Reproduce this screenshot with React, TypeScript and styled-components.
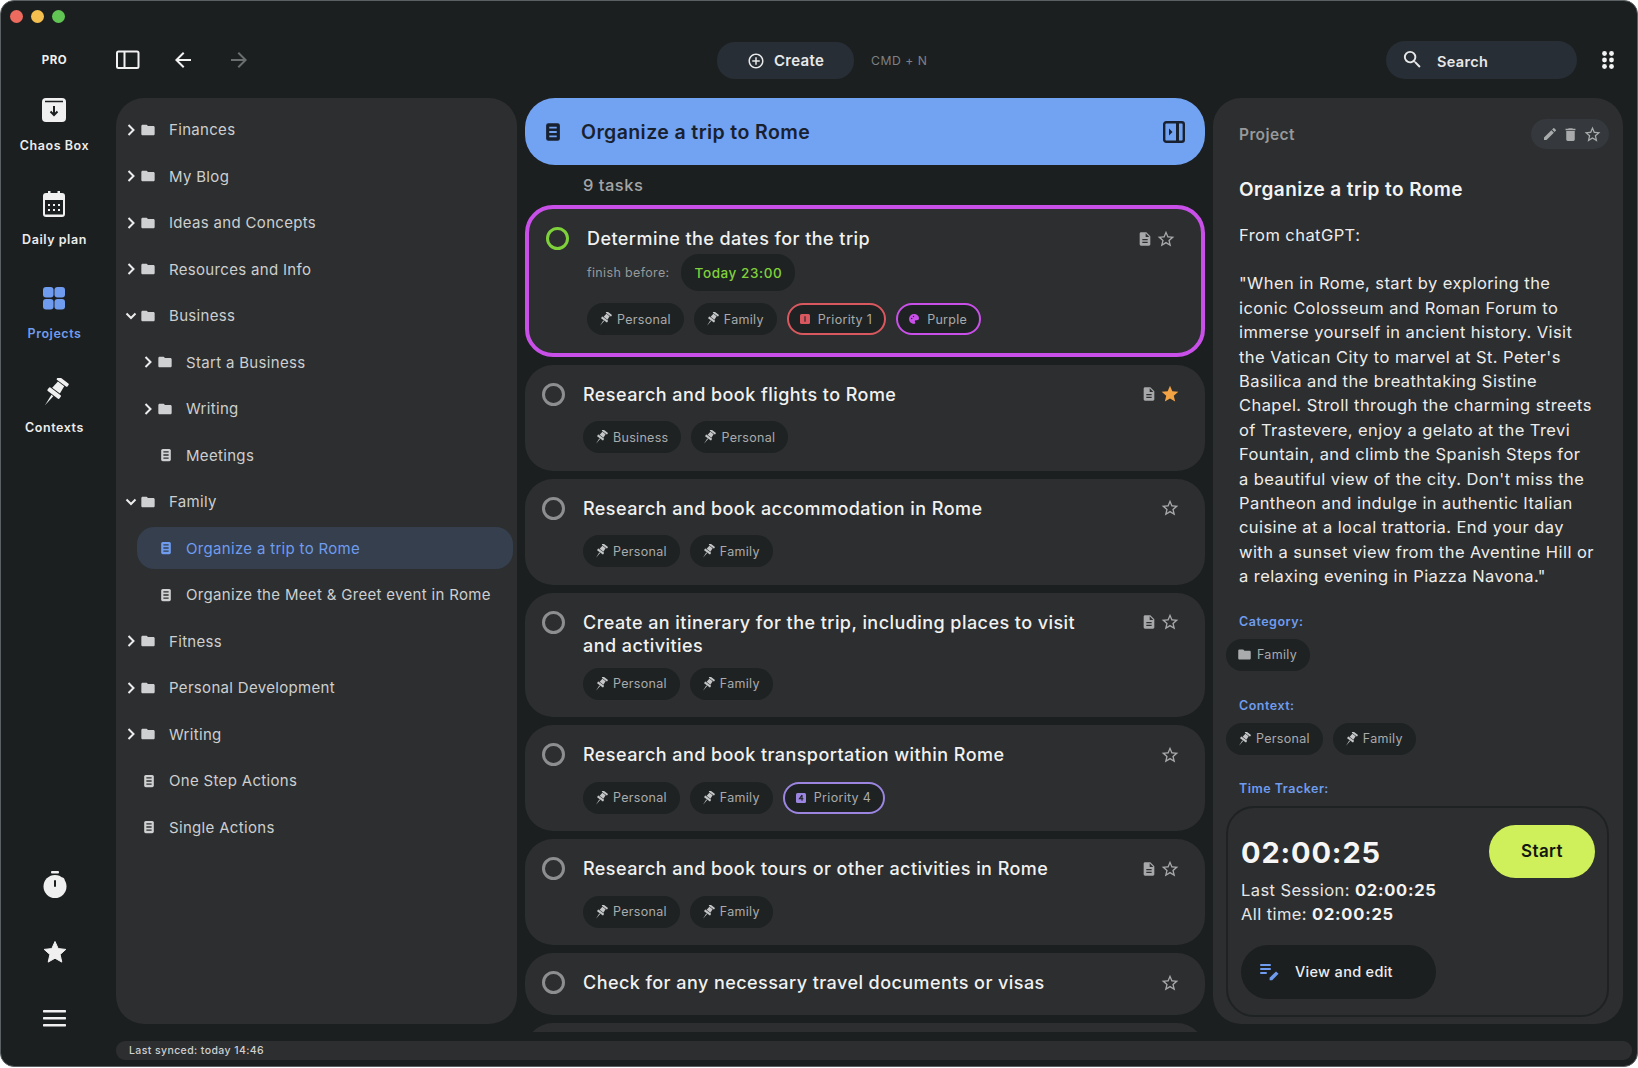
import React from "react";
import styled, { createGlobalStyle } from "styled-components";
import {
  MdAddCircleOutline,
  MdArrowBack,
  MdArrowForward,
  MdDelete,
  MdDescription,
  MdEdit,
  MdFolder,
  MdOutlineStarBorder,
  MdSearch,
  MdStar,
} from "react-icons/md";

const GlobalStyle = createGlobalStyle`
  html, body, #root { margin: 0; height: 100%; background: #fff; }
  * { box-sizing: border-box; }
  body { font-family: Inter, "Noto Sans", sans-serif; overflow: hidden; }
`;

const Window = styled.div`
  width: 1638px;
  height: 1067px;
  display: flex;
  flex-direction: column;
  background: #1c1f20;
  border: 1px solid #5b6163;
  border-radius: 14px;
  overflow: hidden;
`;

const TitleBar = styled.div`
  display: flex;
  gap: 8px;
  height: 30px;
  padding: 9px 0 0 9px;
  flex: none;
`;

const Light = styled.span<{ $color: string }>`
  width: 13px;
  height: 13px;
  border-radius: 50%;
  background: ${(p) => p.$color};
`;

const Body = styled.div`
  flex: 1;
  display: flex;
  min-height: 0;
`;

const Rail = styled.nav`
  width: 115px;
  flex: none;
  display: flex;
  flex-direction: column;
  align-items: center;
  padding: 0 8px 14px 0;
`;

const ProLabel = styled.div`
  height: 30px;
  margin: 14px 0 21px;
  line-height: 30px;
  font-size: 11.5px;
  font-weight: 700;
  letter-spacing: 0.5px;
  color: #f0f0f0;
`;

const RailItem = styled.div<{ $active?: boolean }>`
  height: 94px;
  display: flex;
  flex-direction: column;
  align-items: center;
  white-space: nowrap;
  font-size: 12.5px;
  font-weight: 600;
  letter-spacing: 0.55px;
  color: ${(p) => (p.$active ? "#6f9cee" : "#ececec")};
  svg { display: block; height: 28px; margin-bottom: 14px; }
`;

const RailBottom = styled.div`
  margin-top: auto;
  display: flex;
  flex-direction: column;
  align-items: center;
`;

const RailSlot = styled.div`
  height: 67px;
  display: flex;
  align-items: center;
  svg { display: block; }
`;

const Main = styled.div`
  flex: 1;
  min-width: 0;
  display: flex;
  flex-direction: column;
  padding-right: 5px;
`;

const Toolbar = styled.header`
  height: 67px;
  flex: none;
  display: flex;
  align-items: flex-start;
  padding-right: 18px;
`;

const ToolIcon = styled.button<{ $dim?: boolean; $gap?: number }>`
  height: 24px;
  border: 0;
  padding: 0;
  background: none;
  display: flex;
  align-items: center;
  margin-top: 17px;
  margin-right: ${(p) => p.$gap ?? 0}px;
  color: ${(p) => (p.$dim ? "#6b6e6f" : "#f2f2f2")};
`;

const CreateGroup = styled.div`
  display: flex;
  align-items: center;
  gap: 17px;
  margin: 11px auto 0 466px;
`;

const CreateButton = styled.div`
  width: 137px;
  height: 37px;
  border-radius: 18px;
  background: #272e36;
  display: flex;
  align-items: center;
  justify-content: center;
  gap: 9px;
  font-size: 15px;
  font-weight: 600;
  letter-spacing: 0.3px;
  color: #e8e8e8;
`;

const Shortcut = styled.span`
  font-size: 12.2px;
  letter-spacing: 0.5px;
  color: #7d8184;
`;

const SearchBox = styled.div`
  width: 191px;
  height: 38px;
  margin-top: 10px;
  margin-right: 25px;
  padding: 2px 0 0 15px;
  border-radius: 19px;
  background: #272e36;
  display: flex;
  align-items: center;
  gap: 13px;
  font-size: 14.5px;
  font-weight: 600;
  letter-spacing: 0.35px;
  color: #e8e8e8;
  svg { margin-top: -3px; }
`;

const Panels = styled.div`
  height: 934px;
  flex: none;
  display: flex;
  align-items: stretch;
`;

const FolderPanel = styled.aside`
  width: 401px;
  flex: none;
  margin: 0 8px 8px 0;
  padding: 8.5px 4px 0 0;
  border-radius: 28px;
  background: #2c2e2f;
`;

const FolderRow = styled.div<{ $depth: number; $selected?: boolean }>`
  height: ${(p) => (p.$selected ? 42 : 46.5)}px;
  margin-top: ${(p) => (p.$selected ? 2.25 : 0)}px;
  margin-bottom: ${(p) => (p.$selected ? 2.25 : 0)}px;
  margin-left: ${(p) => (p.$depth === 2 ? 21 : 0)}px;
  display: flex;
  align-items: center;
  padding-left: ${(p) => (p.$depth === 2 ? 20 : p.$depth === 1 ? 23 : 6)}px;
  border-radius: 17px;
  font-size: 15px;
  letter-spacing: 0.32px;
  color: ${(p) => (p.$selected ? "#6f9cee" : "#cdcfd0")};
  background: ${(p) => (p.$selected ? "#353f4d" : "transparent")};
`;

const Chevron = styled.span`
  width: 18px;
  display: flex;
  justify-content: center;
  color: #ececec;
`;

const RowIcon = styled.span<{ $list?: boolean }>`
  width: 16px;
  display: flex;
  justify-content: center;
  margin-left: ${(p) => (p.$list ? 1 : 0)}px;
  margin-right: ${(p) => (p.$list ? 12 : 13)}px;
  color: #cfd0d1;
`;

const ListColumn = styled.section`
  width: 680px;
  flex: none;
  margin-right: 8px;
  overflow: hidden;
`;

const ProjectHeader = styled.div`
  height: 67px;
  padding: 0 20px 0 18px;
  border-radius: 30px;
  background: #72a2f2;
  display: flex;
  align-items: center;
  justify-content: space-between;
  font-size: 19.5px;
  font-weight: 600;
  letter-spacing: 0.4px;
  color: #18212f;
`;

const HeaderTitle = styled.div`
  display: flex;
  align-items: center;
  gap: 18px;
`;

const TaskCount = styled.div`
  height: 40px;
  padding-left: 58px;
  line-height: 40px;
  font-size: 16.5px;
  font-weight: 500;
  letter-spacing: 0.5px;
  color: #a3a5a6;
`;

const TaskCard = styled.article<{ $active?: boolean }>`
  display: flex;
  margin-bottom: 8px;
  padding: 18px 25px 5px 17px;
  border-radius: 28px;
  background: #2c2e2f;
  border: ${(p) => (p.$active ? "4px solid #c850e8" : "0")};
`;

const CheckCircle = styled.span<{ $done?: boolean }>`
  width: 23px;
  height: 23px;
  flex: none;
  margin-right: 18px;
  border-radius: 50%;
  border: 3px solid ${(p) => (p.$done ? "#7fd13b" : "#8c8e8f")};
`;

const TaskBody = styled.div`
  flex: 1;
  min-width: 0;
`;

const TitleBox = styled.div<{ $compact?: boolean }>`
  min-height: ${(p) => (p.$compact ? 27 : 38.5)}px;
  padding-bottom: ${(p) => (p.$compact ? 4 : 11)}px;
  max-width: 520px;
  font-size: 18px;
  line-height: 23px;
  font-weight: 550;
  letter-spacing: 0.44px;
  color: #f1f1f1;
`;

const DueRow = styled.div`
  display: flex;
  align-items: center;
  gap: 11px;
  margin-bottom: 12px;
  font-size: 12.5px;
  letter-spacing: 0.35px;
  color: #97999a;
`;

const DuePill = styled.span`
  height: 37px;
  padding: 0 13px 0 14px;
  border-radius: 18px;
  background: #1f2223;
  display: flex;
  align-items: center;
  font-size: 13.5px;
  font-weight: 500;
  letter-spacing: 0.58px;
  color: #7fd13b;
`;

const ChipRow = styled.div<{ $inset?: boolean }>`
  display: flex;
  flex-wrap: wrap;
  gap: 10px;
  margin-bottom: ${(p) => (p.$inset ? 0 : 12.5)}px;
`;

const Chip = styled.span<{ $ring?: string }>`
  height: 32px;
  padding: 0 ${(p) => (p.$ring ? 12 : 13)}px 0 ${(p) => (p.$ring ? 10 : 11)}px;
  border-radius: 16px;
  background: #1f2223;
  border: ${(p) => (p.$ring ? `2px solid ${p.$ring}` : "0")};
  display: flex;
  align-items: center;
  gap: ${(p) => (p.$ring ? 7 : 5)}px;
  font-size: 12.5px;
  letter-spacing: 0.3px;
  color: #a9abac;
  svg { flex: none; }
`;

const TaskActions = styled.div`
  flex: none;
  display: flex;
  align-items: center;
  align-self: flex-start;
  height: 23px;
  gap: 3px;
  color: #a6a8a9;
`;

const DetailPanel = styled.aside`
  width: 410px;
  flex: none;
  margin-bottom: 8px;
  padding: 21px 14px 7px 13px;
  border-radius: 28px;
  background: #2c2e2f;
  display: flex;
  flex-direction: column;
`;

const DetailHead = styled.div`
  display: flex;
  align-items: center;
  justify-content: space-between;
  padding-left: 13px;
  font-size: 15.5px;
  font-weight: 600;
  letter-spacing: 0.4px;
  color: #97999a;
`;

const ActionPill = styled.div`
  width: 78px;
  height: 30px;
  padding-left: 3px;
  border-radius: 15px;
  background: #35383c;
  display: flex;
  align-items: center;
  justify-content: center;
  gap: 4px;
  color: #a8aaab;
`;

const DetailTitle = styled.h2`
  margin: 29px 0 0 13px;
  font-size: 19px;
  line-height: 24px;
  font-weight: 600;
  letter-spacing: 0.42px;
  color: #f3f3f3;
`;

const DetailText = styled.div`
  margin: 20.5px 0 0 13px;
  font-size: 16.5px;
  line-height: 24.4px;
  letter-spacing: 0.43px;
  color: #ececec;
  white-space: pre-line;
`;

const FieldLabel = styled.div<{ $top: number }>`
  margin: ${(p) => p.$top}px 0 9px 13px;
  font-size: 12.5px;
  line-height: 16px;
  font-weight: 600;
  letter-spacing: 0.5px;
  color: #6f9cee;
`;

const Tracker = styled.div`
  height: 211px;
  padding: 17px 12px 0 13px;
  border: 2px solid #1f2223;
  border-radius: 28px;
  display: flex;
  flex-direction: column;
`;

const TrackerTop = styled.div`
  display: flex;
  justify-content: space-between;
  align-items: flex-start;
`;

const TimerValue = styled.div`
  margin-top: 9px;
  font-size: 29px;
  line-height: 38px;
  font-weight: 700;
  letter-spacing: 0.85px;
  color: #f6f6f6;
`;

const StartButton = styled.button`
  width: 106px;
  height: 53px;
  border: 0;
  border-radius: 27px;
  background: #cff05a;
  font: 600 17px Inter, sans-serif;
  letter-spacing: 0.4px;
  color: #14170f;
`;

const TrackerLine = styled.div`
  font-size: 16.5px;
  line-height: 24px;
  letter-spacing: 0.42px;
  color: #e6e6e6;
  b { font-weight: 700; letter-spacing: 0.75px; color: #f3f3f3; }
`;

const ViewButton = styled.div`
  width: 195px;
  height: 54px;
  margin-top: 19px;
  padding-left: 19px;
  border-radius: 27px;
  background: #1c1f20;
  display: flex;
  align-items: center;
  gap: 15px;
  font-size: 14.5px;
  font-weight: 500;
  letter-spacing: 0.3px;
  color: #eeeeee;
`;

const StatusBar = styled.footer`
  height: 19px;
  margin-top: 9px;
  padding-left: 13px;
  border-radius: 9px;
  background: #2c2e2f;
  display: flex;
  align-items: center;
  font-size: 10.5px;
  font-weight: 500;
  letter-spacing: 0.4px;
  color: #cfd0d1;
`;

const ListGlyph = ({ size = 16, color = "currentColor", ink = "#2c2e2f" }: { size?: number; color?: string; ink?: string }) => (
  <svg width={size} height={size} viewBox="0 0 16 16">
    <rect x="2.5" y="1" width="11" height="14" rx="1.8" fill={color} />
    <path d="M5 4.5h6M5 8h6M5 11.5h6" stroke={ink} strokeWidth="1.5" />
  </svg>
);

const ArrowGlyph = ({ open }: { open?: boolean }) => (
  <svg width="14" height="14" viewBox="0 0 14 14" fill="none" stroke="currentColor" strokeWidth="2">
    <path d={open ? "M2.500 4.500L7 9l4.500-4.500" : "M4.500 2L9.500 7l-5 5"} />
  </svg>
);

// thumbtack used on the rail and in the chips, tilted to the right
const TackGlyph = ({ size, color }: { size: number; color: string }) => (
  <svg width={size} height={size} viewBox="0 0 32 32" fill={color}>
    <g transform="rotate(37 16 16)">
      <rect x="8.500" y="-1" width="15" height="4.500" rx="1.200" />
      <path d="M11.500 4.500h9l1 9.500h-11z" />
      <rect x="7.500" y="15" width="17" height="5" rx="1.200" />
      <path d="M14.700 21h2.600L16 35z" />
    </g>
  </svg>
);

const PriorityGlyph = ({ color, n }: { color: string; n: string }) => (
  <svg width="12" height="12" viewBox="0 0 12 12">
    <rect x="1" y="1" width="10" height="10" rx="1.5" fill={color} />
    <path d={n === "1" ? "M6 3.2v5.6" : "M7 3v5.8M7 3L4.4 6.8H8.4"} stroke="#1f2223" strokeWidth="1.1" fill="none" />
  </svg>
);

const PaletteGlyph = () => (
  <svg width="12" height="12" viewBox="0 0 12 12">
    <path d="M6 1a5 5 0 1 0 0 10c.9 0 1.3-.6 1.3-1.2 0-.8-.5-1-.5-1.6 0-.5.4-.9 1-.9h1.2C10.100 7.300 11 6.500 11 5.300 11 2.900 8.800 1 6 1z" fill="#c850e8" />
    <circle cx="3.700" cy="5.500" r=".7" fill="#1f2223" />
    <circle cx="5.500" cy="3.500" r=".7" fill="#1f2223" />
  </svg>
);

const ChaosIcon = () => (
  <svg width="26" height="28" viewBox="0 0 26 28">
    <rect x="1" y="2" width="24" height="24" rx="4" fill="#f0f0f0" />
    <path d="M4 5.500h18" stroke="#1c1f20" strokeWidth="1.300" />
    <path d="M13 10v9M9.500 15.500L13 19l3.500-3.500" stroke="#1c1f20" strokeWidth="2" fill="none" />
  </svg>
);

const CalendarIcon = () => (
  <svg width="24" height="28" viewBox="0 0 24 28">
    <path d="M6 1h2.500v3H6zM15.500 1H18v3h-2.500z" fill="#f0f0f0" />
    <rect x="1" y="3" width="22" height="24" rx="3" fill="#f0f0f0" />
    <rect x="3" y="10" width="18" height="14.500" fill="#1c1f20" />
    <path d="M6 14h2v2H6zM11 14h2v2h-2zM16 14h2v2h-2zM6 19h2v2H6zM11 19h2v2h-2zM16 19h2v2h-2z" fill="#f0f0f0" />
  </svg>
);

const GridIcon = () => (
  <svg width="24" height="28" viewBox="0 0 24 28" fill="#6f9cee">
    <rect x="1" y="3" width="10.500" height="10.500" rx="3" />
    <rect x="12.500" y="3" width="10.500" height="10.500" rx="3" />
    <rect x="1" y="15" width="10.500" height="10.500" rx="3" />
    <rect x="12.500" y="15" width="10.500" height="10.500" rx="3" />
  </svg>
);

const TimerIcon = () => (
  <svg width="24" height="28" viewBox="0 0 24 28">
    <rect x="8" y="0" width="8" height="2.500" rx="1" fill="#f0f0f0" />
    <circle cx="12" cy="15.500" r="11.500" fill="#f0f0f0" />
    <path d="M19 7l2 2" stroke="#f0f0f0" strokeWidth="2" />
    <rect x="11" y="9" width="2" height="7" rx="1" fill="#1c1f20" />
  </svg>
);

const RailStar = () => (
  <svg width="24" height="24" viewBox="0 0 24 24" fill="#f0f0f0">
    <path d="M12 1.500l3.200 7.100 7.600.8-5.700 5.100 1.700 7.600L12 18.200l-6.800 3.900 1.700-7.600L1.200 9.400l7.600-.8z" stroke="#f0f0f0" strokeLinejoin="round" />
  </svg>
);

const BurgerIcon = () => (
  <svg width="24" height="17" viewBox="0 0 24 17" fill="#f0f0f0">
    <rect y="0" width="23" height="2.400" rx=".6" />
    <rect y="7" width="23" height="2.400" rx=".6" />
    <rect y="14" width="23" height="2.400" rx=".6" />
  </svg>
);

const SidebarIcon = () => (
  <svg width="24" height="20" viewBox="0 0 24 20" fill="none" stroke="#f2f2f2" strokeWidth="2">
    <rect x="1" y="1.500" width="21.500" height="16.500" rx="1.500" />
    <path d="M8.500 1.500v16.500" />
  </svg>
);

const DotsIcon = () => (
  <svg width="12" height="18" viewBox="0 0 12 18" fill="#f2f2f2">
    {[2.500, 9, 15.500].map((y) => (
      <React.Fragment key={y}>
        <circle cx="2.500" cy={y} r="2.400" />
        <circle cx="9.500" cy={y} r="2.400" />
      </React.Fragment>
    ))}
  </svg>
);

const PanelToggle = () => (
  <svg width="22" height="22" viewBox="0 0 22 22" fill="none" stroke="#18212f" strokeWidth="2.400">
    <rect x="1.200" y="1.200" width="19.600" height="19.600" rx="2" />
    <path d="M14.500 1v20" strokeWidth="3" />
    <path d="M6 7.500l3.500 3.500L6 14.500z" fill="#18212f" stroke="none" />
  </svg>
);

const EditListIcon = () => (
  <svg width="20" height="18" viewBox="0 0 20 18" fill="#6f9cee">
    <rect x="0" y="1" width="11" height="2" rx="1" />
    <rect x="0" y="5" width="11" height="2" rx="1" />
    <rect x="0" y="9" width="7" height="2" rx="1" />
    <path d="M16 8.500l2.500 2.300-6.300 6.400H9.600v-2.500z" />
  </svg>
);

const folders = [
  { name: "Finances", depth: 0, kind: "closed" },
  { name: "My Blog", depth: 0, kind: "closed" },
  { name: "Ideas and Concepts", depth: 0, kind: "closed" },
  { name: "Resources and Info", depth: 0, kind: "closed" },
  { name: "Business", depth: 0, kind: "open" },
  { name: "Start a Business", depth: 1, kind: "closed" },
  { name: "Writing", depth: 1, kind: "closed" },
  { name: "Meetings", depth: 1, kind: "list" },
  { name: "Family", depth: 0, kind: "open" },
  { name: "Organize a trip to Rome", depth: 2, kind: "list", selected: true },
  { name: "Organize the Meet & Greet event in Rome", depth: 2, kind: "list" },
  { name: "Fitness", depth: 0, kind: "closed" },
  { name: "Personal Development", depth: 0, kind: "closed" },
  { name: "Writing", depth: 0, kind: "closed" },
  { name: "One Step Actions", depth: 0, kind: "list" },
  { name: "Single Actions", depth: 0, kind: "list" },
];

type Tag = { label: string; kind?: "p1" | "p4" | "purple" };

const tasks: { title: string; tags: Tag[]; note?: boolean; starred?: boolean }[] = [
  { title: "Research and book flights to Rome", note: true, starred: true, tags: [{ label: "Business" }, { label: "Personal" }] },
  { title: "Research and book accommodation in Rome", tags: [{ label: "Personal" }, { label: "Family" }] },
  { title: "Create an itinerary for the trip, including places to visit and activities", note: true, tags: [{ label: "Personal" }, { label: "Family" }] },
  { title: "Research and book transportation within Rome", tags: [{ label: "Personal" }, { label: "Family" }, { label: "Priority 4", kind: "p4" }] },
  { title: "Research and book tours or other activities in Rome", note: true, tags: [{ label: "Personal" }, { label: "Family" }] },
  { title: "Check for any necessary travel documents or visas", tags: [] },
  { title: "", tags: [] },
];

const rings = { p1: "#d9585f", p4: "#9b85e0", purple: "#c850e8" };

const TagChip = ({ tag }: { tag: Tag }) => (
  <Chip $ring={tag.kind ? rings[tag.kind] : undefined}>
    {tag.kind === "p1" && <PriorityGlyph color="#d9585f" n="1" />}
    {tag.kind === "p4" && <PriorityGlyph color="#9b85e0" n="4" />}
    {tag.kind === "purple" && <PaletteGlyph />}
    {!tag.kind && <TackGlyph size={14} color="#c4c6c7" />}
    {tag.label}
  </Chip>
);

const TaskIcons = ({ note, starred }: { note?: boolean; starred?: boolean }) => (
  <TaskActions>
    {note && <MdDescription size={16} />}
    {starred ? <MdStar size={20} color="#f2a344" /> : <MdOutlineStarBorder size={20} />}
  </TaskActions>
);

const description = `"When in Rome, start by exploring the
iconic Colosseum and Roman Forum to
immerse yourself in ancient history. Visit
the Vatican City to marvel at St. Peter's
Basilica and the breathtaking Sistine
Chapel. Stroll through the charming streets
of Trastevere, enjoy a gelato at the Trevi
Fountain, and climb the Spanish Steps for
a beautiful view of the city. Don't miss the
Pantheon and indulge in authentic Italian
cuisine at a local trattoria. End your day
with a sunset view from the Aventine Hill or
a relaxing evening in Piazza Navona."`;

export default function App() {
  return (
    <>
      <GlobalStyle />
      <Window>
        <TitleBar>
          <Light $color="#ec6a5e" />
          <Light $color="#f4bf4f" />
          <Light $color="#61c554" />
        </TitleBar>
        <Body>
          <Rail>
            <ProLabel>PRO</ProLabel>
            <RailItem><ChaosIcon />Chaos Box</RailItem>
            <RailItem><CalendarIcon />Daily plan</RailItem>
            <RailItem $active><GridIcon />Projects</RailItem>
            <RailItem><TackGlyph size={32} color="#f0f0f0" />Contexts</RailItem>
            <RailBottom>
              <RailSlot><TimerIcon /></RailSlot>
              <RailSlot><RailStar /></RailSlot>
              <RailSlot><BurgerIcon /></RailSlot>
            </RailBottom>
          </Rail>
          <Main>
            <Toolbar>
              <ToolIcon $gap={31}><SidebarIcon /></ToolIcon>
              <ToolIcon $gap={32}><MdArrowBack size={24} /></ToolIcon>
              <ToolIcon $dim><MdArrowForward size={24} /></ToolIcon>
              <CreateGroup>
                <CreateButton><MdAddCircleOutline size={18} />Create</CreateButton>
                <Shortcut>CMD + N</Shortcut>
              </CreateGroup>
              <SearchBox><MdSearch size={23} />Search</SearchBox>
              <ToolIcon><DotsIcon /></ToolIcon>
            </Toolbar>
            <Panels>
              <FolderPanel>
                {folders.map((f, i) => (
                  <FolderRow key={i} $depth={f.depth} $selected={f.selected}>
                    {f.depth !== 2 && (
                      <Chevron>
                        {f.kind === "closed" && <ArrowGlyph />}
                        {f.kind === "open" && <ArrowGlyph open />}
                      </Chevron>
                    )}
                    <RowIcon $list={f.kind === "list"}>
                      {f.kind === "list" ? (
                        <ListGlyph size={14} color={f.selected ? "#6f9cee" : "#cfd0d1"} ink={f.selected ? "#353f4d" : "#2c2e2f"} />
                      ) : (
                        <MdFolder size={18} />
                      )}
                    </RowIcon>
                    {f.name}
                  </FolderRow>
                ))}
              </FolderPanel>
              <ListColumn>
                <ProjectHeader>
                  <HeaderTitle>
                    <ListGlyph size={20} color="#18212f" ink="#72a2f2" />
                    Organize a trip to Rome
                  </HeaderTitle>
                  <PanelToggle />
                </ProjectHeader>
                <TaskCount>9 tasks</TaskCount>
                <TaskCard $active>
                  <CheckCircle $done />
                  <TaskBody>
                    <TitleBox $compact>Determine the dates for the trip</TitleBox>
                    <DueRow>
                      finish before:
                      <DuePill>Today 23:00</DuePill>
                    </DueRow>
                    <ChipRow>
                      <TagChip tag={{ label: "Personal" }} />
                      <TagChip tag={{ label: "Family" }} />
                      <TagChip tag={{ label: "Priority 1", kind: "p1" }} />
                      <TagChip tag={{ label: "Purple", kind: "purple" }} />
                    </ChipRow>
                  </TaskBody>
                  <TaskIcons note />
                </TaskCard>
                {tasks.map((t, i) => (
                  <TaskCard key={i}>
                    {t.title && <CheckCircle />}
                    <TaskBody>
                      <TitleBox>{t.title}</TitleBox>
                      {t.tags.length > 0 && (
                        <ChipRow>
                          {t.tags.map((tag) => <TagChip key={tag.label} tag={tag} />)}
                        </ChipRow>
                      )}
                    </TaskBody>
                    {t.title && <TaskIcons note={t.note} starred={t.starred} />}
                  </TaskCard>
                ))}
              </ListColumn>
              <DetailPanel>
                <DetailHead>
                  Project
                  <ActionPill>
                    <MdEdit size={16} />
                    <MdDelete size={17} />
                    <MdOutlineStarBorder size={19} />
                  </ActionPill>
                </DetailHead>
                <DetailTitle>Organize a trip to Rome</DetailTitle>
                <DetailText>{"From chatGPT:\n\n" + description}</DetailText>
                <FieldLabel $top={25}>Category:</FieldLabel>
                <ChipRow $inset>
                  <Chip><MdFolder size={15} />Family</Chip>
                </ChipRow>
                <FieldLabel $top={27}>Context:</FieldLabel>
                <ChipRow $inset>
                  <TagChip tag={{ label: "Personal" }} />
                  <TagChip tag={{ label: "Family" }} />
                </ChipRow>
                <FieldLabel $top={26}>Time Tracker:</FieldLabel>
                <Tracker>
                  <TrackerTop>
                    <TimerValue>02:00:25</TimerValue>
                    <StartButton>Start</StartButton>
                  </TrackerTop>
                  <TrackerLine>Last Session: <b>02:00:25</b></TrackerLine>
                  <TrackerLine>All time: <b>02:00:25</b></TrackerLine>
                  <ViewButton><EditListIcon />View and edit</ViewButton>
                </Tracker>
              </DetailPanel>
            </Panels>
            <StatusBar>Last synced: today 14:46</StatusBar>
          </Main>
        </Body>
      </Window>
    </>
  );
}
